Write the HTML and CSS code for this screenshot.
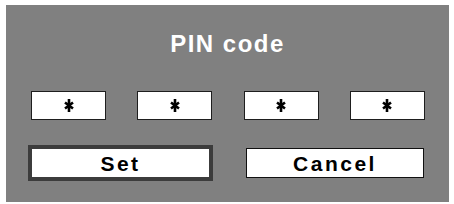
FILE: index.html
```html
<!DOCTYPE html>
<html lang="en">
<head>
    <meta charset="UTF-8">
    <title>PIN code</title>
    <link rel="stylesheet" href="styles.css">
</head>
<body>
    <div class="panel">
        <h1 class="title">PIN code</h1>
        <div class="digits">
            <div class="digit"><svg viewBox="0 0 10 13" width="10" height="13"><path d="M5 0V13M1 3.5L9 9.5M1 9.5L9 3.5"/></svg></div>
            <div class="digit"><svg viewBox="0 0 10 13" width="10" height="13"><path d="M5 0V13M1 3.5L9 9.5M1 9.5L9 3.5"/></svg></div>
            <div class="digit"><svg viewBox="0 0 10 13" width="10" height="13"><path d="M5 0V13M1 3.5L9 9.5M1 9.5L9 3.5"/></svg></div>
            <div class="digit"><svg viewBox="0 0 10 13" width="10" height="13"><path d="M5 0V13M1 3.5L9 9.5M1 9.5L9 3.5"/></svg></div>
        </div>
        <div class="actions">
            <div class="btn selected">Set</div>
            <div class="btn">Cancel</div>
        </div>
    </div>
</body>
</html>
```

FILE: styles.css
```css
body {
    margin: 0;
    background: #fff;
    font-family: "Liberation Sans", Arial, sans-serif;
}
.panel {
    margin: 5px 0 0 6px;
    width: 443px;
    height: 197px;
    background: #808080;
    display: flex;
    flex-direction: column;
}
.title {
    margin: 24px 0 0;
    height: 30px;
    line-height: 30px;
    text-align: center;
    color: #fff;
    font-size: 24px;
    font-weight: bold;
    letter-spacing: 1.5px;
}
.digits {
    margin: 32px 24px 0 25px;
    display: flex;
    justify-content: space-between;
}
.digit {
    width: 73px;
    height: 27px;
    background: #fff;
    border: 1.5px solid #1e1e1e;
    display: flex;
    align-items: center;
    justify-content: center;
}
.digit svg {
    fill: none;
    stroke: #000;
    stroke-width: 2.6;
}
.actions {
    margin: 25px 0 0 22px;
    display: flex;
    align-items: center;
    gap: 33px;
}
.btn {
    width: 176px;
    height: 28px;
    line-height: 29px;
    background: #fff;
    border: 1.5px solid #111;
    text-align: center;
    color: #000;
    font-size: 21px;
    font-weight: bold;
    letter-spacing: 2.5px;
}
.btn.selected {
    width: 177px;
    height: 28px;
    border: 4px solid #3c3c3c;
}
```
